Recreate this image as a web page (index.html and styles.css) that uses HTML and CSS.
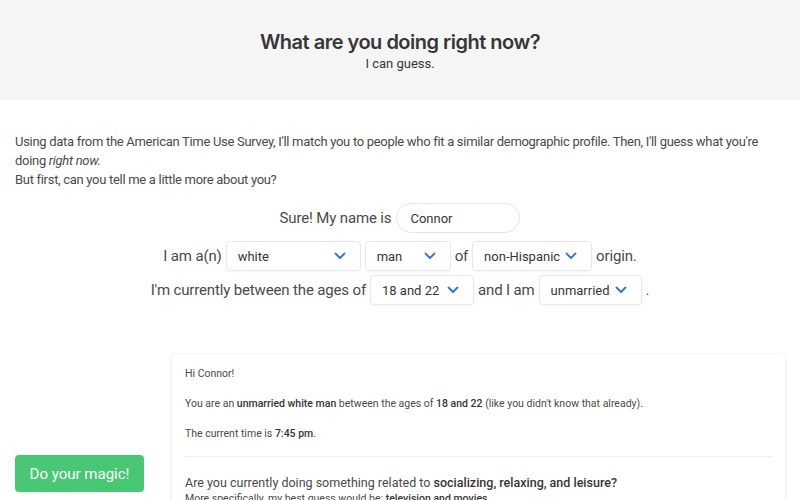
FILE: index.html
```html
<!DOCTYPE html>
<html>
<head>
<meta charset="utf-8">
<link rel="stylesheet" href="styles.css">
</head>
<body>
<section class="hero">
  <h1 class="title">What are you doing right now?</h1>
  <p class="subtitle">I can guess.</p>
</section>
<section class="intro">
  <p>Using data from the American Time Use Survey, I'll match you to people who fit a similar demographic profile. Then, I'll guess what you're doing <em>right now.</em></p>
  <p>But first, can you tell me a little more about you?</p>
</section>
<section class="form">
  <div class="row">
    <span>Sure! My name is</span>
    <input class="name" type="text" value="Connor">
  </div>
  <div class="row">
    <span>I am a(n)</span>
    <div class="select w-race"><span>white</span><svg viewBox="0 0 12 8"><path d="M1.5 1.5 6 6l4.5-4.5"/></svg></div>
    <div class="select w-sex"><span>man</span><svg viewBox="0 0 12 8"><path d="M1.5 1.5 6 6l4.5-4.5"/></svg></div>
    <span>of</span>
    <div class="select w-hisp"><span>non-Hispanic</span><svg viewBox="0 0 12 8"><path d="M1.5 1.5 6 6l4.5-4.5"/></svg></div>
    <span>origin.</span>
  </div>
  <div class="row row3">
    <span>I'm currently between the ages of</span>
    <div class="select w-age"><span>18 and 22</span><svg viewBox="0 0 12 8"><path d="M1.5 1.5 6 6l4.5-4.5"/></svg></div>
    <span>and I am</span>
    <div class="select w-mar"><span>unmarried</span><svg viewBox="0 0 12 8"><path d="M1.5 1.5 6 6l4.5-4.5"/></svg></div>
    <span>.</span>
  </div>
</section>
<section class="results">
  <div class="side">
    <button class="magic">Do your magic!</button>
  </div>
  <div class="card">
    <p>Hi Connor!</p>
    <p>You are an <b>unmarried white man</b> between the ages of <b>18 and 22</b> (like you didn't know that already).</p>
    <p>The current time is <b>7:45 pm</b>.</p>
    <hr>
    <p class="q">Are you currently doing something related to <b>socializing, relaxing, and leisure?</b></p>
    <p class="more">More specifically, my best guess would be: <b>television and movies</b></p>
  </div>
</section>
</body>
</html>
```
FILE: styles.css
```css
* { box-sizing: border-box; }
html, body { margin: 0; padding: 0; }
body {
  font-family: Roboto, "Noto Sans", sans-serif;
  color: #4a4a4a;
  background: #fff;
  width: 800px;
  height: 500px;
  overflow: hidden;
}
.hero {
  background: #f5f5f5;
  height: 100px;
  text-align: center;
  padding-top: 30px;
}
.title {
  margin: 0;
  font-family: Inter, Roboto, sans-serif;
  font-size: 20px;
  font-weight: 600;
  color: #363636;
  line-height: 24px;
  letter-spacing: -0.5px;
}
.subtitle {
  margin: 1px 0 0;
  font-size: 13px;
  line-height: 18px;
  color: #363636;
}
.intro {
  padding: 32px 15px 0;
  font-size: 13px;
  line-height: 19px;
  letter-spacing: -0.3px;
}
.intro p { margin: 0; }
.form {
  padding-top: 14px;
  font-size: 15px;
  color: #4a4a4a;
}
.row {
  display: flex;
  justify-content: center;
  align-items: center;
  gap: 4px;
  margin-bottom: 8px;
  white-space: nowrap;
  letter-spacing: -0.15px;
}
.row3 { margin-top: -4px; }
.name {
  width: 124px;
  height: 30px;
  border: 1px solid #e6e6e6;
  border-radius: 15px;
  padding: 0 13px;
  font: inherit;
  font-size: 13px;
  color: #363636;
  outline: none;
  flex: none;
  margin-left: 1px;
}
.select {
  flex: none;
  height: 30px;
  border: 1px solid #e8e8e8;
  border-radius: 4px;
  box-shadow: 0 1px 2px rgba(10,10,10,0.04);
  display: flex;
  align-items: center;
  justify-content: space-between;
  padding: 0 14px 0 11px;
  font-size: 13px;
  letter-spacing: 0;
  color: #363636;
}
.select svg {
  width: 12px;
  height: 8px;
  fill: none;
  stroke: #3273dc;
  stroke-width: 1.8;
  stroke-linecap: round;
  stroke-linejoin: round;
}
.w-race { width: 135px; }
.w-sex { width: 86px; }
.w-hisp { width: 120px; }
.w-age { width: 104px; }
.w-mar { width: 103px; }
.results {
  display: flex;
  align-items: flex-start;
  padding: 0 15px 0 15px;
  margin-top: 49px;
}
.side {
  width: 157px;
  flex: none;
  padding-top: 101px;
}
.magic {
  width: 129px;
  height: 37px;
  border: none;
  border-radius: 4px;
  background: #48c774;
  color: #fff;
  font-family: inherit;
  font-size: 15px;
}
.card {
  flex: 1;
  background: #fff;
  box-shadow: 0 2px 6px rgba(10,10,10,0.08), 0 0 0 1px rgba(10,10,10,0.02);
  border-radius: 4px;
  padding: 12px 12px 12px 13px;
  font-size: 10.5px;
  line-height: 15px;
}
.card p { margin: 0 0 15px; }
.card b { font-weight: 500; color: #363636; }
.card hr {
  border: none;
  border-top: 1px solid #f0f0f0;
  margin: 0 0 17px;
}
.card .q {
  font-size: 12.5px;
  line-height: 17px;
  margin: 0;
}
.card .more { margin: 0; }
```
